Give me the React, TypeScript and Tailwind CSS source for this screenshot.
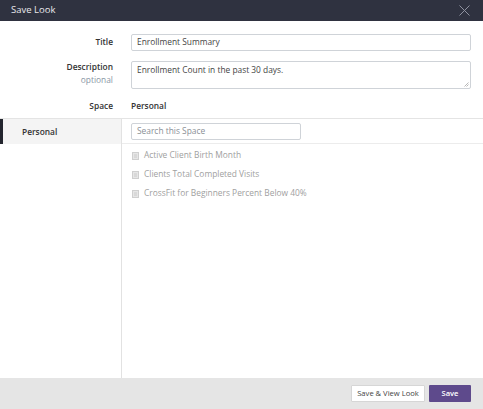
import React from 'react';

const items = [
  'Active Client Birth Month',
  'Clients Total Completed Visits',
  'CrossFit for Beginners Percent Below 40%',
];

const FormRow: React.FC<{ label: string; sub?: string; children: React.ReactNode; className?: string }> = ({
  label,
  sub,
  children,
  className,
}) => (
  <div className={`flex ${className ?? ''}`}>
    <div className="w-[113px] shrink-0 text-right">
      <div className="font-semibold text-[#333]">{label}</div>
      {sub && <div className="text-[#8a97a5]">{sub}</div>}
    </div>
    <div className="ml-[18px] mr-[12px] flex-1">{children}</div>
  </div>
);

export default function App() {
  return (
    <div
      className="flex h-[409px] w-[483px] flex-col bg-white text-[8.4px] text-[#444]"
      style={{ fontFamily: '"Open Sans", "Liberation Sans", sans-serif' }}>
      <div className="flex h-[21px] shrink-0 items-center justify-between bg-[#2f3240] pl-[11px] pr-[13px]">
        <span className="text-[9.5px] text-[#e8e8ec]">Save Look</span>
        <svg width="11" height="11" viewBox="0 0 11 11" className="text-[#8f92a0]">
          <path d="M0.5 0.5 L10.5 10.5 M10.5 0.5 L0.5 10.5" stroke="currentColor" strokeWidth="1" />
        </svg>
      </div>

      <div className="shrink-0 pt-[13px]">
        <FormRow label="Title" className="items-center">
          <div className="flex h-[17px] items-center rounded-[2px] border border-[#cfd3d8] px-[5px] text-[#444]">
            Enrollment Summary
          </div>
        </FormRow>
        <FormRow label="Description" sub="optional" className="mt-[10px] items-start">
          <div className="relative h-[28px] rounded-[2px] border border-[#cfd3d8] px-[5px] pt-[2px] text-[#444]">
            Enrollment Count in the past 30 days.
            <svg width="5" height="5" viewBox="0 0 5 5" className="absolute bottom-[1px] right-[1px] text-[#999]">
              <path d="M4.5 0.5 L0.5 4.5 M4.5 2.5 L2.5 4.5" stroke="currentColor" strokeWidth="0.7" />
            </svg>
          </div>
        </FormRow>
        <FormRow label="Space" className="mt-[10px] h-[15px] items-center">
          <span className="font-semibold text-[#333]">Personal</span>
        </FormRow>
      </div>

      <div className="mt-[4px] flex min-h-0 flex-1 border-t border-[#e4e4e4]">
        <div className="w-[122px] shrink-0 border-r border-[#e2e2e2]">
          <div className="flex h-[25px] items-center border-l-[3px] border-[#23252e] bg-[#f4f4f4] pl-[19px] pt-[1px] font-semibold text-[#333]">
            Personal
          </div>
        </div>
        <div className="flex-1">
          <div className="flex h-[25px] items-center border-b border-[#ececec] pl-[9px]">
            <div className="flex h-[17px] w-[170px] items-center rounded-[2px] border border-[#cfd3d8] px-[5px] text-[#8a8f96]">
              Search this Space
            </div>
          </div>
          <div className="pl-[10px] pt-[2px]">
            {items.map((t) => (
              <div key={t} className="flex h-[19px] items-center gap-[5px] text-[#a0a0a0]">
                <svg width="7" height="8" viewBox="0 0 7 8">
                  <rect x="0.5" y="0.5" width="6" height="7" fill="#e6e6e6" stroke="#cfcfcf" />
                  <path d="M2 3 H5 M2 5 H5" stroke="#c4c4c4" strokeWidth="0.8" />
                </svg>
                {t}
              </div>
            ))}
          </div>
        </div>
      </div>

      <div className="flex h-[31px] shrink-0 items-center justify-end gap-[4px] bg-[#e5e5e5] pr-[12px]">
        <button className="flex h-[17px] w-[74px] items-center justify-center whitespace-nowrap rounded-[1px] border border-[#d6d6d6] bg-white text-[7.6px] text-[#444]">
          Save &amp; View Look
        </button>
        <button className="flex h-[17px] w-[42px] items-center justify-center rounded-[1px] bg-[#5e4a8c] text-[7.6px] font-semibold text-white">
          Save
        </button>
      </div>
    </div>
  );
}
